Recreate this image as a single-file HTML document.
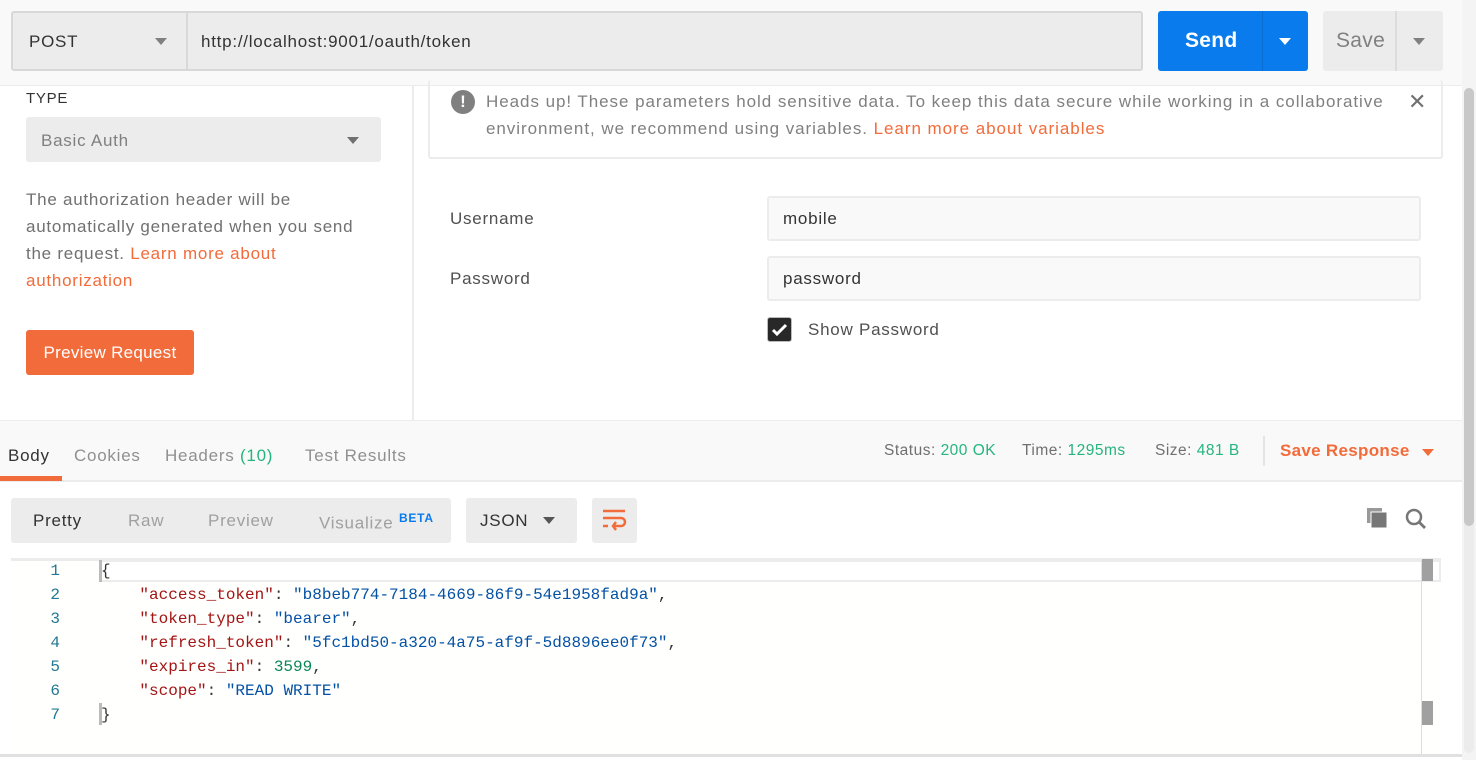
<!DOCTYPE html>
<html><head><meta charset="utf-8"><style>
*{box-sizing:border-box;margin:0;padding:0}
body{width:1476px;height:760px;position:relative;overflow:hidden;background:#fff;font-family:"Liberation Sans",sans-serif;color:#505050;font-size:17px;letter-spacing:0.75px}
.a{position:absolute;white-space:nowrap}
.tri{position:absolute;width:0;height:0;border-left:6px solid transparent;border-right:6px solid transparent;border-top:7px solid #808080}
.mono{font-family:"Liberation Mono",monospace;font-size:16px;letter-spacing:0}
pre.a{white-space:pre}
.k{color:#a31515}.s{color:#0451a5}.n{color:#098658}
</style></head><body>
<!-- top bar -->
<div class="a" style="left:0;top:0;width:1462px;height:86px;background:#f9f9f9;border-bottom:1px solid #ececec"></div>
<div class="a" style="left:11px;top:11px;width:1132px;height:60px;background:#ececec;border:2px solid #d8d8d8;border-radius:3px"></div>
<div class="a" style="left:186px;top:12px;width:2px;height:58px;background:#d8d8d8"></div>
<div class="a" style="left:29px;top:32px;color:#333">POST</div>
<div class="tri" style="left:155px;top:38px"></div>
<div class="a" style="left:201px;top:32px;color:#333">http://localhost:9001/oauth/token</div>
<div class="a" style="left:1158px;top:11px;width:150px;height:60px;background:#097bed;border-radius:3px"></div>
<div class="a" style="left:1262px;top:11px;width:1px;height:60px;background:#0a6dd2"></div>
<div class="a" style="left:1185px;top:29px;color:#fff;font-weight:bold;font-size:21px;letter-spacing:0.3px">Send</div>
<div class="tri" style="left:1279px;top:38px;border-top-color:#fff"></div>
<div class="a" style="left:1323px;top:11px;width:120px;height:60px;background:#ececec;border-radius:3px"></div>
<div class="a" style="left:1395px;top:11px;width:2px;height:60px;background:#dcdcdc"></div>
<div class="a" style="left:1336px;top:29px;color:#808080;font-size:21px;letter-spacing:0.3px">Save</div>
<div class="tri" style="left:1413px;top:38px"></div>
<!-- scrollbar -->
<div class="a" style="left:1462px;top:0;width:14px;height:760px;background:#f4f4f4"></div>
<div class="a" style="left:1464px;top:88px;width:10px;height:665px;background:#ececec;border-radius:5px"></div>
<div class="a" style="left:1464px;top:88px;width:10px;height:438px;background:#c8c8c8;border-radius:5px"></div>
<!-- left panel -->
<div class="a" style="left:412px;top:86px;width:2px;height:334px;background:#ececec"></div>
<div class="a" style="left:26px;top:90px;font-size:15px;color:#333">TYPE</div>
<div class="a" style="left:26px;top:117px;width:355px;height:45px;background:#ececec;border-radius:3px"></div>
<div class="a" style="left:41px;top:131px;color:#808080">Basic Auth</div>
<div class="tri" style="left:347px;top:137px;border-top-color:#707070"></div>
<div class="a" style="left:26px;top:186px;line-height:27px;color:#707070">The authorization header will be<br>automatically generated when you send<br>the request. <span style="color:#f26b3a">Learn more about<br>authorization</span></div>
<div class="a" style="left:26px;top:330px;width:168px;height:45px;background:#f26b3a;border-radius:3px;color:#fff;text-align:center;line-height:45px;letter-spacing:0.3px">Preview Request</div>
<!-- right panel -->
<div class="a" style="left:428px;top:80px;width:1015px;height:79px;border:2px solid #ececec;border-top:none;border-radius:3px"></div>
<div class="a" style="left:451px;top:90px;width:24px;height:24px;border-radius:50%;background:#808080;color:#fff;font-weight:bold;text-align:center;line-height:24px;font-size:17px;letter-spacing:0">!</div>
<div class="a" style="left:486px;top:88px;line-height:27px;color:#808080;letter-spacing:0.95px">Heads up! These parameters hold sensitive data. To keep this data secure while working in a collaborative<br>environment, we recommend using variables. <span style="color:#f26b3a">Learn more about variables</span></div>
<div class="a" style="left:1408px;top:89px;font-size:22px;color:#707070">✕</div>
<div class="a" style="left:450px;top:209px">Username</div>
<div class="a" style="left:450px;top:269px">Password</div>
<div class="a" style="left:767px;top:196px;width:654px;height:45px;background:#f9f9f9;border:2px solid #ececec;border-radius:3px"></div>
<div class="a" style="left:783px;top:209px;color:#333">mobile</div>
<div class="a" style="left:767px;top:256px;width:654px;height:45px;background:#f9f9f9;border:2px solid #ececec;border-radius:3px"></div>
<div class="a" style="left:783px;top:269px;color:#333">password</div>
<div class="a" style="left:767px;top:317px;width:25px;height:25px;background:#282828;border-radius:3px;border:1px solid #bbb"></div>
<svg class="a" style="left:767px;top:317px" width="25" height="25"><path d="M6 13l4 4 9-9" stroke="#fff" stroke-width="3" fill="none"/></svg>
<div class="a" style="left:808px;top:320px">Show Password</div>
<!-- response header -->
<div class="a" style="left:0;top:420px;width:1462px;height:62px;background:#f9f9f9;border-top:1px solid #ececec;border-bottom:2px solid #ececec"></div>
<div class="a" style="left:8px;top:446px;color:#333">Body</div>
<div class="a" style="left:0;top:476px;width:62px;height:5px;background:#f26b3a"></div>
<div class="a" style="left:74px;top:446px;color:#909090">Cookies</div>
<div class="a" style="left:165px;top:446px;color:#909090">Headers <span style="color:#26b47f">(10)</span></div>
<div class="a" style="left:305px;top:446px;color:#909090">Test Results</div>
<div class="a" style="left:884px;top:442px;font-size:15.5px;color:#707070;letter-spacing:0.5px">Status: <span style="color:#26b47f">200 OK</span></div>
<div class="a" style="left:1022px;top:442px;font-size:15.5px;color:#707070;letter-spacing:0.5px">Time: <span style="color:#26b47f">1295ms</span></div>
<div class="a" style="left:1155px;top:442px;font-size:15.5px;color:#707070;letter-spacing:0.5px">Size: <span style="color:#26b47f">481 B</span></div>
<div class="a" style="left:1263px;top:436px;width:2px;height:30px;background:#e4e4e4"></div>
<div class="a" style="left:1280px;top:441px;color:#f26b3a;font-weight:bold;font-size:17px;letter-spacing:0.3px">Save Response</div>
<div class="tri" style="left:1422px;top:449px;border-top-color:#f26b3a"></div>
<!-- toolbar -->
<div class="a" style="left:11px;top:498px;width:440px;height:45px;background:#ececec;border-radius:3px"></div>
<div class="a" style="left:33px;top:511px;color:#333">Pretty</div>
<div class="a" style="left:128px;top:511px;color:#a0a0a0">Raw</div>
<div class="a" style="left:208px;top:511px;color:#a0a0a0">Preview</div>
<div class="a" style="left:319px;top:511px;color:#a0a0a0">Visualize <sup style="color:#097bed;font-size:12px;font-weight:bold">BETA</sup></div>
<div class="a" style="left:466px;top:498px;width:111px;height:45px;background:#ececec;border-radius:3px"></div>
<div class="a" style="left:480px;top:511px;color:#333">JSON</div>
<div class="tri" style="left:543px;top:517px;border-top-color:#555"></div>
<div class="a" style="left:592px;top:498px;width:45px;height:45px;background:#ececec;border-radius:3px"></div>
<svg class="a" style="left:592px;top:498px" width="45" height="45"><g stroke="#f26b3a" stroke-width="2.5" fill="none"><path d="M11 13h22M11 20h18a4 4 0 010 8h-8"/><path d="M24 24l-3 4 3 4"/><path d="M11 28h5"/></g></svg>
<svg class="a" style="left:1365px;top:506px" width="26" height="26"><rect x="2" y="2" width="15" height="15" fill="#999"/><rect x="6" y="6" width="16" height="16" fill="#777" stroke="#fff" stroke-width="1"/></svg>
<svg class="a" style="left:1403px;top:506px" width="26" height="26"><circle cx="11" cy="11" r="7" stroke="#777" stroke-width="2.5" fill="none"/><path d="M16 16l6 6" stroke="#777" stroke-width="2.8"/></svg>
<!-- code -->
<div class="a" style="left:11px;top:558px;width:1430px;height:198px;background:#fffffd;border-top:3px solid #ececec"></div>
<div class="a" style="left:99px;top:560px;width:1342px;height:22px;border:2px solid #ececec;border-left:none;background:#fff"></div>
<div class="a" style="left:1421px;top:560px;width:1px;height:196px;background:#ddd"></div>
<div class="a" style="left:1422px;top:559px;width:11px;height:22px;background:#a0a0a0"></div>
<div class="a" style="left:1422px;top:701px;width:11px;height:24px;background:#a0a0a0"></div>
<div class="a" style="left:99px;top:560px;width:3px;height:22px;background:#bbb"></div>
<div class="a" style="left:99px;top:703px;width:3px;height:22px;background:#bbb"></div>
<div class="a" style="left:0;top:754px;width:1462px;height:3px;background:#e0e0e0"></div>
<div class="a mono" style="left:40px;top:559px;line-height:24px;color:#237893;text-align:right;width:20px">1<br>2<br>3<br>4<br>5<br>6<br>7</div>
<pre class="a mono" style="left:101px;top:559px;line-height:24px;color:#333">{
    <span class="k">"access_token"</span>: <span class="s">"b8beb774-7184-4669-86f9-54e1958fad9a"</span>,
    <span class="k">"token_type"</span>: <span class="s">"bearer"</span>,
    <span class="k">"refresh_token"</span>: <span class="s">"5fc1bd50-a320-4a75-af9f-5d8896ee0f73"</span>,
    <span class="k">"expires_in"</span>: <span class="n">3599</span>,
    <span class="k">"scope"</span>: <span class="s">"READ WRITE"</span>
}</pre>
</body></html>
